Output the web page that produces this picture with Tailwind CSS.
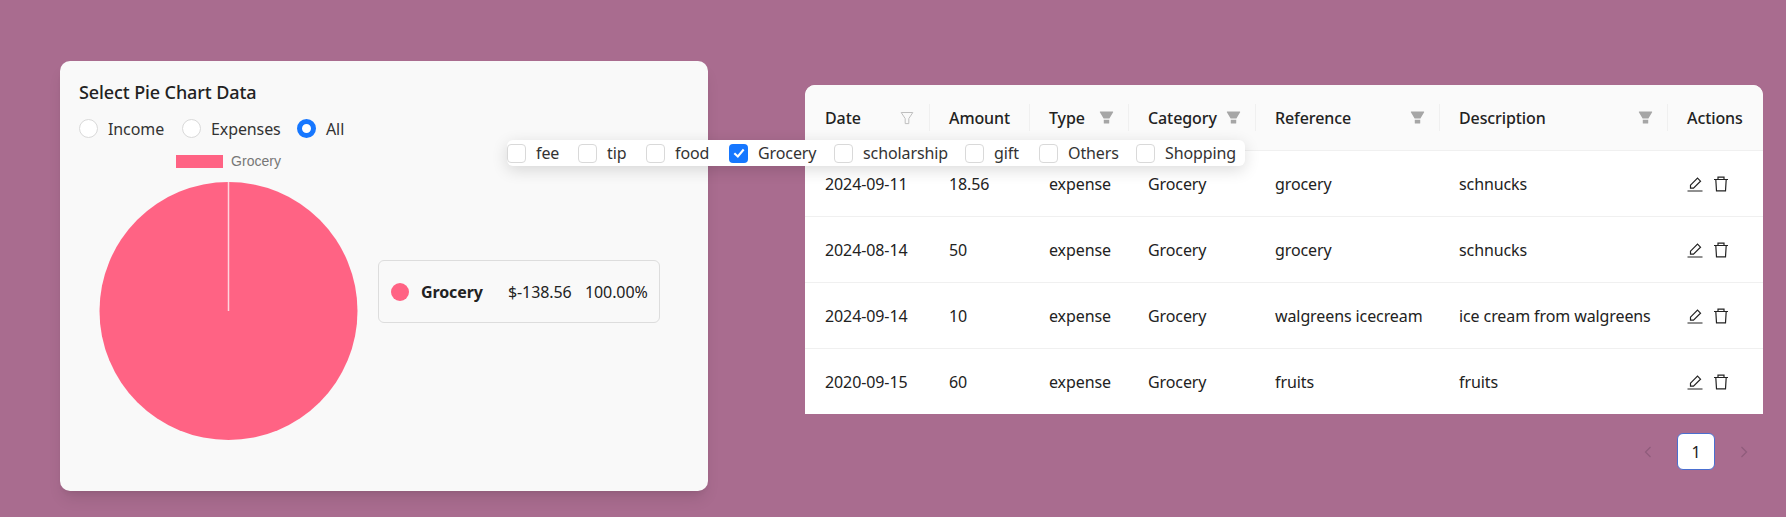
<!DOCTYPE html>
<html lang="en">
<head>
    <meta charset="UTF-8">
    <title>Expenses</title>
    <script src="https://cdn.jsdelivr.net/npm/@tailwindcss/browser@4"></script>
</head>
<body class="bg-[#a96c8f] font-['Noto_Sans',sans-serif] text-base tracking-[-0.1px] text-[#222]">
<div class="relative h-[517px] w-[1786px] overflow-hidden">
    <main class="flex items-start pl-[60px] pt-[61px]">
        <!-- Pie chart card -->
        <section class="h-[430px] w-[648px] shrink-0 rounded-[10px] bg-[#f9f9f9] pl-[19px] pt-[19px] shadow-lg">
            <h2 class="h-6 text-lg leading-6 font-medium">Select Pie Chart Data</h2>
            <div class="mt-[15px] flex h-[19px] items-center text-[#333]">
                <span class="size-[19px] rounded-full border border-[#d9d9d9] bg-white"></span>
                <span class="ml-[10px] w-[74px]">Income</span>
                <span class="size-[19px] rounded-full border border-[#d9d9d9] bg-white"></span>
                <span class="ml-[10px] w-[86px]">Expenses</span>
                <span class="size-[19px] rounded-full border-[5px] border-[#1677ff] bg-white"></span>
                <span class="ml-[10px]">All</span>
            </div>
            <div class="flex">
                <div class="ml-5 w-[259px]">
                    <div class="mt-[15px] flex h-4 items-center justify-center gap-2 font-['Liberation_Sans',sans-serif] text-sm tracking-normal text-[#777]">
                        <span class="h-[13px] w-[47px] bg-[#ff6384]"></span>
                        <span>Grocery</span>
                    </div>
                    <svg class="mt-[12px] block" width="259" height="259" viewBox="0 0 259 259">
                        <circle cx="129.5" cy="130" r="129" fill="#ff6384"/>
                        <line x1="129.5" y1="1" x2="129.5" y2="130" stroke="#ffd5de" stroke-width="1.5"/>
                    </svg>
                </div>
                <div class="mt-[122px] ml-5 flex h-[63px] w-[282px] items-center rounded-md border border-[#ddd] pl-3">
                    <span class="size-[18px] rounded-full bg-[#ff6384]"></span>
                    <span class="ml-[12px] w-[87px] font-bold">Grocery</span>
                    <span class="w-[77px]">$-138.56</span>
                    <span>100.00%</span>
                </div>
            </div>
        </section>

        <!-- Transactions table -->
        <section class="mt-6 ml-[97px] w-[958px] shrink-0">
            <table class="w-full table-fixed border-separate border-spacing-0 overflow-hidden rounded-t-[10px] bg-white">
                <thead class="bg-[#fafafa] text-left">
                    <tr class="h-[66px]">
                        <th class="w-[125px] border-b border-[#f0f0f0] font-medium">
                            <div class="flex h-[27px] items-center justify-between border-r border-[#f0f0f0] pr-[15px] pl-5">Date
                                <svg class="size-[14px]" viewBox="0 0 14 14" fill="none" stroke="#bfbfbf"><path d="M1.2 1.5h11.6L8.8 7.6v5H5.2v-5z"/></svg>
                            </div>
                        </th>
                        <th class="w-[100px] border-b border-[#f0f0f0] font-medium">
                            <div class="flex h-[27px] items-center border-r border-[#f0f0f0] pl-[19px]">Amount</div>
                        </th>
                        <th class="w-[99px] border-b border-[#f0f0f0] font-medium">
                            <div class="flex h-[27px] items-center justify-between border-r border-[#f0f0f0] pr-[14px] pl-[19px]">Type
                                <svg class="size-[15px]" viewBox="64 64 896 896" fill="#a6a6a6"><path d="M349 838c0 17.7 14.2 32 31.8 32h262.4c17.6 0 31.8-14.3 31.8-32V642H349v196zm531.1-684H143.9c-24.5 0-39.8 26.7-27.5 48l221.3 376h348.8l221.3-376c12.1-21.3-3.2-48-27.7-48z"/></svg>
                            </div>
                        </th>
                        <th class="w-[127px] border-b border-[#f0f0f0] font-medium">
                            <div class="flex h-[27px] items-center justify-between border-r border-[#f0f0f0] pr-[14px] pl-[19px]">Category
                                <svg class="size-[15px]" viewBox="64 64 896 896" fill="#a6a6a6"><path d="M349 838c0 17.7 14.2 32 31.8 32h262.4c17.6 0 31.8-14.3 31.8-32V642H349v196zm531.1-684H143.9c-24.5 0-39.8 26.7-27.5 48l221.3 376h348.8l221.3-376c12.1-21.3-3.2-48-27.7-48z"/></svg>
                            </div>
                        </th>
                        <th class="w-[184px] border-b border-[#f0f0f0] font-medium">
                            <div class="flex h-[27px] items-center justify-between border-r border-[#f0f0f0] pr-[14px] pl-[19px]">Reference
                                <svg class="size-[15px]" viewBox="64 64 896 896" fill="#a6a6a6"><path d="M349 838c0 17.7 14.2 32 31.8 32h262.4c17.6 0 31.8-14.3 31.8-32V642H349v196zm531.1-684H143.9c-24.5 0-39.8 26.7-27.5 48l221.3 376h348.8l221.3-376c12.1-21.3-3.2-48-27.7-48z"/></svg>
                            </div>
                        </th>
                        <th class="w-[228px] border-b border-[#f0f0f0] font-medium">
                            <div class="flex h-[27px] items-center justify-between border-r border-[#f0f0f0] pr-[14px] pl-[19px]">Description
                                <svg class="size-[15px]" viewBox="64 64 896 896" fill="#a6a6a6"><path d="M349 838c0 17.7 14.2 32 31.8 32h262.4c17.6 0 31.8-14.3 31.8-32V642H349v196zm531.1-684H143.9c-24.5 0-39.8 26.7-27.5 48l221.3 376h348.8l221.3-376c12.1-21.3-3.2-48-27.7-48z"/></svg>
                            </div>
                        </th>
                        <th class="border-b border-[#f0f0f0] pl-[19px] font-medium">Actions</th>
                    </tr>
                </thead>
                <tbody>
                    <tr class="h-[66px]">
                        <td class="border-b border-[#f0f0f0] pl-5">2024-09-11</td>
                        <td class="border-b border-[#f0f0f0] pl-[19px]">18.56</td>
                        <td class="border-b border-[#f0f0f0] pl-[19px]">expense</td>
                        <td class="border-b border-[#f0f0f0] pl-[19px]">Grocery</td>
                        <td class="border-b border-[#f0f0f0] pl-[19px]">grocery</td>
                        <td class="border-b border-[#f0f0f0] pl-[19px]">schnucks</td>
                        <td class="border-b border-[#f0f0f0] pl-[19px]">
                            <div class="flex gap-[10px]">
                                <svg class="size-4" viewBox="0 0 16 16" fill="none" stroke="#222" stroke-width="1.2"><path d="M.5 15h15M3.5 12.2V9.2L10.5 2.2l3 3-7 7z"/></svg>
                                <svg class="size-4" viewBox="0 0 16 16" fill="none" stroke="#222" stroke-width="1.2"><path d="M1 3.5h14M5 3.5V1.2h6v2.3M2.8 3.5l.7 11.3h9l.7-11.3"/></svg>
                            </div>
                        </td>
                    </tr>
                    <tr class="h-[66px]">
                        <td class="border-b border-[#f0f0f0] pl-5">2024-08-14</td>
                        <td class="border-b border-[#f0f0f0] pl-[19px]">50</td>
                        <td class="border-b border-[#f0f0f0] pl-[19px]">expense</td>
                        <td class="border-b border-[#f0f0f0] pl-[19px]">Grocery</td>
                        <td class="border-b border-[#f0f0f0] pl-[19px]">grocery</td>
                        <td class="border-b border-[#f0f0f0] pl-[19px]">schnucks</td>
                        <td class="border-b border-[#f0f0f0] pl-[19px]">
                            <div class="flex gap-[10px]">
                                <svg class="size-4" viewBox="0 0 16 16" fill="none" stroke="#222" stroke-width="1.2"><path d="M.5 15h15M3.5 12.2V9.2L10.5 2.2l3 3-7 7z"/></svg>
                                <svg class="size-4" viewBox="0 0 16 16" fill="none" stroke="#222" stroke-width="1.2"><path d="M1 3.5h14M5 3.5V1.2h6v2.3M2.8 3.5l.7 11.3h9l.7-11.3"/></svg>
                            </div>
                        </td>
                    </tr>
                    <tr class="h-[66px]">
                        <td class="border-b border-[#f0f0f0] pl-5">2024-09-14</td>
                        <td class="border-b border-[#f0f0f0] pl-[19px]">10</td>
                        <td class="border-b border-[#f0f0f0] pl-[19px]">expense</td>
                        <td class="border-b border-[#f0f0f0] pl-[19px]">Grocery</td>
                        <td class="border-b border-[#f0f0f0] pl-[19px]">walgreens icecream</td>
                        <td class="border-b border-[#f0f0f0] pl-[19px]">ice cream from walgreens</td>
                        <td class="border-b border-[#f0f0f0] pl-[19px]">
                            <div class="flex gap-[10px]">
                                <svg class="size-4" viewBox="0 0 16 16" fill="none" stroke="#222" stroke-width="1.2"><path d="M.5 15h15M3.5 12.2V9.2L10.5 2.2l3 3-7 7z"/></svg>
                                <svg class="size-4" viewBox="0 0 16 16" fill="none" stroke="#222" stroke-width="1.2"><path d="M1 3.5h14M5 3.5V1.2h6v2.3M2.8 3.5l.7 11.3h9l.7-11.3"/></svg>
                            </div>
                        </td>
                    </tr>
                    <tr class="h-[65px]">
                        <td class="pl-5">2020-09-15</td>
                        <td class="pl-[19px]">60</td>
                        <td class="pl-[19px]">expense</td>
                        <td class="pl-[19px]">Grocery</td>
                        <td class="pl-[19px]">fruits</td>
                        <td class="pl-[19px]">fruits</td>
                        <td class="pl-[19px]">
                            <div class="flex gap-[10px]">
                                <svg class="size-4" viewBox="0 0 16 16" fill="none" stroke="#222" stroke-width="1.2"><path d="M.5 15h15M3.5 12.2V9.2L10.5 2.2l3 3-7 7z"/></svg>
                                <svg class="size-4" viewBox="0 0 16 16" fill="none" stroke="#222" stroke-width="1.2"><path d="M1 3.5h14M5 3.5V1.2h6v2.3M2.8 3.5l.7 11.3h9l.7-11.3"/></svg>
                            </div>
                        </td>
                    </tr>
                </tbody>
            </table>
            <div class="mt-[19px] flex items-center justify-end pr-[13px]">
                <svg class="size-3" viewBox="0 0 12 12" fill="none" stroke="#8f5c7b" stroke-width="1.2"><path d="M8.5 1 3.5 6l5 5"/></svg>
                <span class="mx-[23px] flex h-[37px] w-[38px] items-center justify-center rounded-md border border-[#4a6fd0] bg-white text-base text-[#222]">1</span>
                <svg class="size-3" viewBox="0 0 12 12" fill="none" stroke="#8f5c7b" stroke-width="1.2"><path d="M3.5 1l5 5-5 5"/></svg>
            </div>
        </section>
    </main>

    <!-- Category checkboxes, floating over both panels -->
    <div class="absolute top-[140px] left-[507px] flex h-[26px] w-[738px] items-center rounded-md bg-white text-[#333] shadow-[0_4px_16px_rgba(0,0,0,0.14)]">
        <span class="size-[19px] rounded-[4px] border border-[#d9d9d9] bg-white"></span><span class="ml-[10px] w-[42px]">fee</span>
        <span class="size-[19px] rounded-[4px] border border-[#d9d9d9] bg-white"></span><span class="ml-[10px] w-[39px]">tip</span>
        <span class="size-[19px] rounded-[4px] border border-[#d9d9d9] bg-white"></span><span class="ml-[10px] w-[54px]">food</span>
        <span class="flex size-[19px] items-center justify-center rounded-[4px] bg-[#1677ff]">
            <svg class="size-[14px]" viewBox="0 0 12 12" fill="none" stroke="#fff" stroke-width="1.8"><path d="M2 6.2 5 9l5-6"/></svg>
        </span><span class="ml-[10px] w-[76px]">Grocery</span>
        <span class="size-[19px] rounded-[4px] border border-[#d9d9d9] bg-white"></span><span class="ml-[10px] w-[102px]">scholarship</span>
        <span class="size-[19px] rounded-[4px] border border-[#d9d9d9] bg-white"></span><span class="ml-[10px] w-[45px]">gift</span>
        <span class="size-[19px] rounded-[4px] border border-[#d9d9d9] bg-white"></span><span class="ml-[10px] w-[68px]">Others</span>
        <span class="size-[19px] rounded-[4px] border border-[#d9d9d9] bg-white"></span><span class="ml-[10px]">Shopping</span>
    </div>
</div>
</body>
</html>
